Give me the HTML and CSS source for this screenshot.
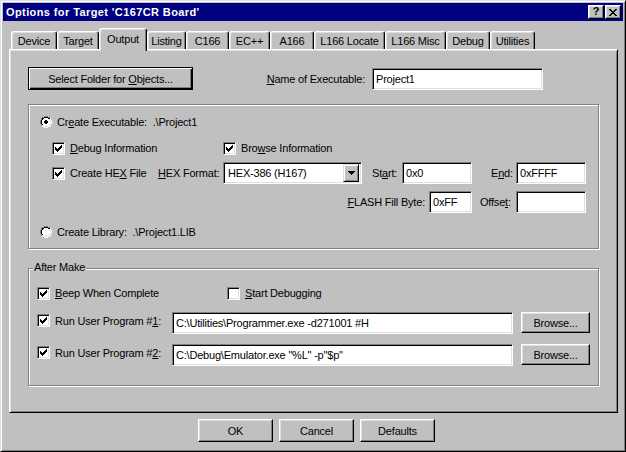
FILE: index.html
```html
<!DOCTYPE html>
<html>
<head>
<meta charset="utf-8">
<link rel="stylesheet" href="styles.css">
</head>
<body>
<div class="window">
  <div class="titlebar">
    <span class="title">Options for Target 'C167CR Board'</span>
    <div class="tb-buttons">
      <span class="tb-btn tb-help">?</span>
      <span class="tb-btn"><svg width="8" height="7" viewBox="0 0 8 7" shape-rendering="crispEdges"><path d="M0 0h2v1h-2z M6 0h2v1h-2z M1 1h2v1h-2z M5 1h2v1h-2z M2 2h4v1h-4z M3 3h2v1h-2z M2 4h4v1h-4z M1 5h2v1h-2z M5 5h2v1h-2z M0 6h2v1h-2z M6 6h2v1h-2z" fill="#000"/></svg></span>
    </div>
  </div>

  <div class="tabs">
    <div class="tab t1">Device</div>
    <div class="tab t2">Target</div>
    <div class="tab t3 sel">Output</div>
    <div class="tab t4">Listing</div>
    <div class="tab t5">C166</div>
    <div class="tab t6">EC++</div>
    <div class="tab t7">A166</div>
    <div class="tab t8">L166 Locate</div>
    <div class="tab t9">L166 Misc</div>
    <div class="tab t10">Debug</div>
    <div class="tab t11">Utilities</div>
  </div>

  <div class="panel">
    <div class="row-top">
      <div class="btn btn-default btn-folder"><span>Select Folder for <u>O</u>bjects...</span></div>
      <span class="lbl lbl-name"><u>N</u>ame of Executable:</span>
      <div class="edit e-name">Project1</div>
    </div>

    <div class="group g1">
      <div class="row r-exe">
        <span class="opt">
          <svg class="radio" width="12" height="12" viewBox="0 0 12 12" shape-rendering="crispEdges">
            <path fill="#808080" d="M4 0h4v1h-4z M2 1h2v1h-2z M8 1h2v1h-2z M1 2h1v2h-1z M0 4h1v4h-1z M1 8h1v2h-1z"/>
            <path fill="#000" d="M4 1h4v1h-4z M2 2h2v1h-2z M8 2h2v1h-2z M2 3h1v1h-1z M1 4h1v4h-1z M2 8h1v1h-1z"/>
            <path fill="#dfdfdf" d="M9 3h1v1h-1z M10 4h1v4h-1z M9 8h1v1h-1z M2 9h2v1h-2z M8 9h2v1h-2z M4 10h4v1h-4z"/>
            <path fill="#fff" d="M10 2h1v2h-1z M11 4h1v4h-1z M10 8h1v2h-1z M2 10h2v1h-2z M8 10h2v1h-2z M4 11h4v1h-4z M4 2h4v1h-4z M3 3h6v1h-6z M2 4h8v4h-8z M3 8h6v1h-6z M4 9h4v1h-4z"/>
            <path fill="#000" d="M5 4h2v1h-2z M4 5h4v2h-4z M5 7h2v1h-2z"/>
          </svg>
          <span>Cr<u>e</u>ate Executable:&nbsp; .\Project1</span>
        </span>
      </div>

      <div class="row r-dbg">
        <span class="chk w-dbg"><span class="cb"><svg width="7" height="7" viewBox="0 0 7 7" shape-rendering="crispEdges"><path d="M0 2h1v3h-1z M1 3h1v3h-1z M2 4h1v3h-1z M3 3h1v3h-1z M4 2h1v3h-1z M5 1h1v3h-1z M6 0h1v3h-1z" fill="#000"/></svg></span><span><u>D</u>ebug Information</span></span>
        <span class="chk"><span class="cb"><svg width="7" height="7" viewBox="0 0 7 7" shape-rendering="crispEdges"><path d="M0 2h1v3h-1z M1 3h1v3h-1z M2 4h1v3h-1z M3 3h1v3h-1z M4 2h1v3h-1z M5 1h1v3h-1z M6 0h1v3h-1z" fill="#000"/></svg></span><span>Bro<u>w</u>se Information</span></span>
      </div>

      <div class="row r-hex">
        <span class="chk w-hex"><span class="cb"><svg width="7" height="7" viewBox="0 0 7 7" shape-rendering="crispEdges"><path d="M0 2h1v3h-1z M1 3h1v3h-1z M2 4h1v3h-1z M3 3h1v3h-1z M4 2h1v3h-1z M5 1h1v3h-1z M6 0h1v3h-1z" fill="#000"/></svg></span><span>Create HE<u>X</u> File</span></span>
        <span class="lbl lbl-hexfmt"><u>H</u>EX Format:</span>
        <div class="edit combo">
          <span class="combo-text">HEX-386 (H167)</span>
          <span class="drop"><svg width="7" height="4" viewBox="0 0 7 4" shape-rendering="crispEdges"><path d="M0 0h7v1h-7z M1 1h5v1h-5z M2 2h3v1h-3z M3 3h1v1h-1z" fill="#000"/></svg></span>
        </div>
        <span class="lbl lbl-start">St<u>a</u>rt:</span>
        <div class="edit e-start">0x0</div>
        <span class="lbl lbl-end">E<u>n</u>d:</span>
        <div class="edit e-end">0xFFFF</div>
      </div>

      <div class="row r-flash">
        <span class="lbl lbl-flash"><u>F</u>LASH Fill Byte:</span>
        <div class="edit e-fill">0xFF</div>
        <span class="lbl lbl-offset">Offse<u>t</u>:</span>
        <div class="edit e-offset"></div>
      </div>

      <div class="row r-lib">
        <span class="opt">
          <svg class="radio" width="12" height="12" viewBox="0 0 12 12" shape-rendering="crispEdges">
            <path fill="#808080" d="M4 0h4v1h-4z M2 1h2v1h-2z M8 1h2v1h-2z M1 2h1v2h-1z M0 4h1v4h-1z M1 8h1v2h-1z"/>
            <path fill="#000" d="M4 1h4v1h-4z M2 2h2v1h-2z M8 2h2v1h-2z M2 3h1v1h-1z M1 4h1v4h-1z M2 8h1v1h-1z"/>
            <path fill="#dfdfdf" d="M9 3h1v1h-1z M10 4h1v4h-1z M9 8h1v1h-1z M2 9h2v1h-2z M8 9h2v1h-2z M4 10h4v1h-4z"/>
            <path fill="#fff" d="M10 2h1v2h-1z M11 4h1v4h-1z M10 8h1v2h-1z M2 10h2v1h-2z M8 10h2v1h-2z M4 11h4v1h-4z M4 2h4v1h-4z M3 3h6v1h-6z M2 4h8v4h-8z M3 8h6v1h-6z M4 9h4v1h-4z"/>
          </svg>
          <span>Create Library:&nbsp; .\Project1.LIB</span>
        </span>
      </div>
    </div>

    <div class="group g2">
      <span class="group-title">After Make</span>
      <div class="row r-beep">
        <span class="chk w-beep"><span class="cb"><svg width="7" height="7" viewBox="0 0 7 7" shape-rendering="crispEdges"><path d="M0 2h1v3h-1z M1 3h1v3h-1z M2 4h1v3h-1z M3 3h1v3h-1z M4 2h1v3h-1z M5 1h1v3h-1z M6 0h1v3h-1z" fill="#000"/></svg></span><span><u>B</u>eep When Complete</span></span>
        <span class="chk"><span class="cb"></span><span><u>S</u>tart Debugging</span></span>
      </div>
      <div class="row r-run r-run1">
        <span class="chk w-run"><span class="cb"><svg width="7" height="7" viewBox="0 0 7 7" shape-rendering="crispEdges"><path d="M0 2h1v3h-1z M1 3h1v3h-1z M2 4h1v3h-1z M3 3h1v3h-1z M4 2h1v3h-1z M5 1h1v3h-1z M6 0h1v3h-1z" fill="#000"/></svg></span><span>Run User Program #<u>1</u>:</span></span>
        <div class="edit e-run">C:\Utilities\Programmer.exe -d271001 #H</div>
        <div class="btn btn-browse">Browse...</div>
      </div>
      <div class="row r-run r-run2">
        <span class="chk w-run"><span class="cb"><svg width="7" height="7" viewBox="0 0 7 7" shape-rendering="crispEdges"><path d="M0 2h1v3h-1z M1 3h1v3h-1z M2 4h1v3h-1z M3 3h1v3h-1z M4 2h1v3h-1z M5 1h1v3h-1z M6 0h1v3h-1z" fill="#000"/></svg></span><span>Run User Program #<u>2</u>:</span></span>
        <div class="edit e-run">C:\Debug\Emulator.exe "%L" -p"$p"</div>
        <div class="btn btn-browse">Browse...</div>
      </div>
    </div>
  </div>

  <div class="footer">
    <div class="btn btn-foot">OK</div>
    <div class="btn btn-foot">Cancel</div>
    <div class="btn btn-foot">Defaults</div>
  </div>
</div>
</body>
</html>
```

FILE: styles.css
```css
* { box-sizing: border-box; }
html, body { margin: 0; padding: 0; }
body {
  width: 626px;
  height: 452px;
  overflow: hidden;
  background: #c0c0c0;
  font-family: "Liberation Sans", Arial, sans-serif;
  font-size: 11px;
  letter-spacing: -0.2px;
  color: #000;
}
u { text-decoration: underline; text-underline-offset: 1px; }

.window {
  width: 626px;
  height: 452px;
  padding: 2px;
  background: #c0c0c0;
  border: 1px solid;
  border-color: #dfdfdf #000 #000 #dfdfdf;
  box-shadow: inset 1px 1px #fff, inset -1px -1px #808080;
}

.titlebar {
  height: 18px;
  background: #000080;
  color: #fff;
  display: flex;
  align-items: center;
  padding: 0 2px 0 3px;
  font-weight: bold;
  letter-spacing: 0.4px;
}
.tb-buttons { margin-left: auto; display: flex; gap: 1px; }
.tb-btn {
  width: 16px;
  height: 14px;
  background: #c0c0c0;
  border: 1px solid;
  border-color: #fff #000 #000 #fff;
  box-shadow: inset -1px -1px #808080, inset 1px 1px #dfdfdf;
  display: flex;
  align-items: center;
  justify-content: center;
  color: #000;
  font-weight: bold;
  font-size: 11px;
  letter-spacing: 0;
  line-height: 1;
}
.tb-help { padding-bottom: 1px; }

/* tabs */
.tabs {
  display: flex;
  align-items: flex-end;
  height: 21px;
  margin-top: 7px;
  padding-left: 8px;
  position: relative;
  z-index: 1;
}
.tab {
  height: 18px;
  display: flex;
  align-items: center;
  justify-content: center;
  background: #c0c0c0;
  border-top: 1px solid #fff;
  border-left: 1px solid #fff;
  border-right: 1px solid #000;
  border-radius: 3px 3px 0 0;
  box-shadow: inset -1px 0 #808080, inset 1px 1px #dfdfdf;
  white-space: nowrap;
  padding-top: 1px;
}
.tab.sel {
  height: 23px;
  margin-bottom: -2px;
  padding-top: 0;
  padding-bottom: 3px;
}
.t1 { width: 46px; }
.t2 { width: 42px; }
.t3 { width: 48px; }
.t4 { width: 39px; }
.t5 { width: 43px; }
.t6 { width: 41px; }
.t7 { width: 44px; }
.t8 { width: 71px; }
.t9 { width: 61px; }
.t10 { width: 44px; }
.t11 { width: 45px; }

/* panel */
.panel {
  width: 609px;
  height: 364px;
  margin-left: 6px;
  border: 1px solid;
  border-color: #fff #000 #000 #fff;
  box-shadow: inset 1px 1px #dfdfdf, inset -1px -1px #808080;
  padding: 17px 0 0 18px;
}

.row-top {
  display: flex;
  align-items: center;
  width: 515px;
  height: 23px;
}

.lbl { white-space: nowrap; }
.lbl-name { flex: 1; text-align: right; padding-right: 7px; }

/* controls */
.btn {
  height: 23px;
  background: #c0c0c0;
  border: 1px solid;
  border-color: #fff #000 #000 #fff;
  box-shadow: inset -1px -1px #808080, inset 1px 1px #dfdfdf;
  display: flex;
  align-items: center;
  justify-content: center;
  white-space: nowrap;
}
.btn-default {
  border-color: #000;
  box-shadow: inset 1px 1px #fff, inset -1px -1px #000, inset -2px -2px #808080;
}
.btn-folder { width: 165px; }

.edit {
  height: 22px;
  background: #fff;
  border: 1px solid;
  border-color: #808080 #fff #fff #808080;
  box-shadow: inset 1px 1px #000, inset -1px -1px #dfdfdf;
  display: flex;
  align-items: center;
  padding-left: 3px;
  white-space: nowrap;
  overflow: hidden;
}
.e-name { width: 171px; }

.group {
  position: relative;
  width: 571px;
  border: 1px solid #808080;
  box-shadow: inset 1px 1px #fff, 1px 1px #fff;
}
.g1 { height: 145px; margin-top: 14px; }
.g2 { height: 118px; margin-top: 19px; }
.group-title {
  position: absolute;
  left: 4px;
  top: -8px;
  padding: 0 1px;
  background: #c0c0c0;
  line-height: 13px;
}

.row { display: flex; align-items: center; }

.opt { display: flex; align-items: center; gap: 5px; white-space: nowrap; }
.radio { display: block; flex: none; }

.chk { display: flex; align-items: center; gap: 5px; white-space: nowrap; flex: none; }
.cb {
  width: 13px;
  height: 13px;
  flex: none;
  background: #fff;
  border: 1px solid;
  border-color: #808080 #fff #fff #808080;
  box-shadow: inset 1px 1px #000, inset -1px -1px #dfdfdf;
  padding: 2px;
}
.cb svg { display: block; }

.r-exe { height: 14px; margin-top: 10px; padding-left: 11px; }
.r-dbg { height: 14px; margin-top: 12px; padding-left: 23px; }
.w-dbg { width: 171px; }
.r-hex { height: 22px; margin-top: 7px; padding-left: 23px; }
.w-hex { width: 106px; }
.lbl-hexfmt { width: 65px; }
.combo { width: 139px; padding-left: 2px; padding-right: 2px; }
.combo-text { flex: 1; padding-left: 2px; }
.drop {
  width: 16px;
  height: 18px;
  background: #c0c0c0;
  border: 1px solid;
  border-color: #dfdfdf #000 #000 #dfdfdf;
  box-shadow: inset 1px 1px #fff, inset -1px -1px #808080;
  display: flex;
  align-items: center;
  justify-content: center;
}
.drop svg { display: block; }
.lbl-start { width: 30px; margin-left: 10px; }
.e-start { width: 70px; }
.lbl-end { width: 25px; margin-left: 19px; }
.e-end { width: 70px; }

.r-flash { height: 22px; margin-top: 7px; }
.lbl-flash { width: 400px; text-align: right; padding-right: 4px; }
.e-fill { width: 43px; }
.lbl-offset { width: 44px; padding-left: 8px; }
.e-offset { width: 70px; }

.r-lib { height: 14px; margin-top: 12px; padding-left: 11px; }

.r-beep { height: 14px; margin-top: 17px; padding-left: 8px; }
.w-beep { width: 190px; }
.r-run { height: 22px; padding-left: 8px; align-items: flex-start; }
.r-run1 { margin-top: 12px; }
.r-run2 { margin-top: 10px; }
.w-run { width: 135px; height: 15px; margin-top: 1px; }
.e-run { width: 341px; }
.btn-browse { width: 69px; height: 21px; margin-left: 8px; }

.footer {
  display: flex;
  gap: 6px;
  padding-left: 195px;
  margin-top: 6px;
}
.btn-foot { width: 75px; }
```
